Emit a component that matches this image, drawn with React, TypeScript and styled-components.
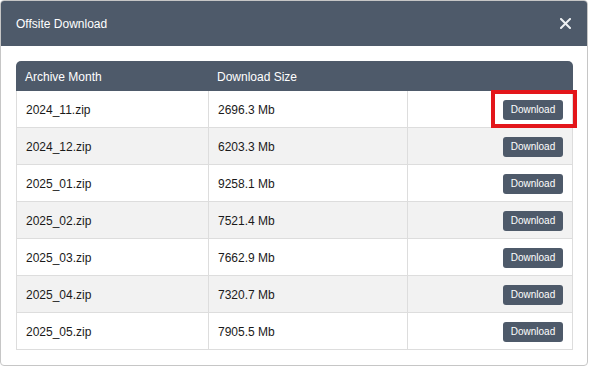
import React from 'react'
import styled, { createGlobalStyle } from 'styled-components'

const GlobalStyle = createGlobalStyle`
  html, body {
    margin: 0;
    padding: 0;
    background: #ffffff;
    font-family: "Liberation Sans", Arial, sans-serif;
  }
`

const archives = [
  { name: '2024_11.zip', size: '2696.3 Mb' },
  { name: '2024_12.zip', size: '6203.3 Mb' },
  { name: '2025_01.zip', size: '9258.1 Mb' },
  { name: '2025_02.zip', size: '7521.4 Mb' },
  { name: '2025_03.zip', size: '7662.9 Mb' },
  { name: '2025_04.zip', size: '7320.7 Mb' },
  { name: '2025_05.zip', size: '7905.5 Mb' },
]

const App: React.FC = () => {
  return (
    <>
      <GlobalStyle />
      <Dialog>
        <TitleBar>
          <Title>Offsite Download</Title>
          <CloseButton aria-label="Close">
            <svg width="11" height="11" viewBox="0 0 11 11">
              <path d="M1 1 L10 10 M10 1 L1 10" stroke="#eef0f2" strokeWidth="2" strokeLinecap="square" />
            </svg>
          </CloseButton>
        </TitleBar>
        <Body>
          <Table>
            <colgroup>
              <col style={{ width: 192 }} />
              <col style={{ width: 199 }} />
              <col />
            </colgroup>
            <thead>
              <tr>
                <HeadCell>Archive Month</HeadCell>
                <HeadCell>Download Size</HeadCell>
                <HeadCell />
              </tr>
            </thead>
            <tbody>
              {archives.map((a, i) => (
                <Row key={a.name} $alt={i % 2 === 1}>
                  <Cell>{a.name}</Cell>
                  <Cell>{a.size}</Cell>
                  <ActionCell>
                    <ButtonWrap>
                      <DownloadButton>Download</DownloadButton>
                      {i === 0 && <Highlight />}
                    </ButtonWrap>
                  </ActionCell>
                </Row>
              ))}
            </tbody>
          </Table>
        </Body>
      </Dialog>
    </>
  )
}

const Dialog = styled.div`
  box-sizing: border-box;
  width: 588px;
  height: 366px;
  border: 1px solid #c6c6c6;
  border-radius: 4px;
  background: #ffffff;
  overflow: hidden;
`

const TitleBar = styled.div`
  display: flex;
  align-items: center;
  justify-content: space-between;
  height: 45px;
  padding: 0 15px 0 15px;
  background: #4e5a6a;
  color: #ffffff;
`

const Title = styled.span`
  font-size: 12px;
`

const CloseButton = styled.span`
  display: flex;
  align-items: center;
  justify-content: center;
  width: 14px;
  height: 14px;
`

const Body = styled.div`
  padding: 15px 14px 14px 15px;
`

const Table = styled.table`
  width: 557px;
  border-collapse: separate;
  border-spacing: 0;
  table-layout: fixed;
  font-size: 12px;
  color: #1a1a1a;
`

const HeadCell = styled.th`
  height: 30px;
  padding: 1px 9px 0;
  background: #4e5a6a;
  color: #ffffff;
  font-weight: normal;
  text-align: left;
  box-sizing: border-box;
  &:first-child {
    border-top-left-radius: 5px;
  }
  &:last-child {
    border-top-right-radius: 5px;
  }
`

const Row = styled.tr<{ $alt: boolean }>`
  background: ${p => (p.$alt ? '#f2f2f2' : '#ffffff')};
`

const Cell = styled.td`
  height: 37px;
  box-sizing: border-box;
  padding: 2px 9px 0;
  border-bottom: 1px solid #dddddd;
  border-left: 1px solid #dddddd;
  &:last-child {
    border-right: 1px solid #dddddd;
  }
`

const ActionCell = styled(Cell)`
  text-align: right;
  padding: 1px 9px 0 9px;
`

const ButtonWrap = styled.span`
  position: relative;
  display: inline-block;
  vertical-align: middle;
`

const DownloadButton = styled.button`
  display: block;
  width: 60px;
  height: 20px;
  padding: 0;
  border: none;
  border-radius: 3px;
  background: #4e5a6a;
  color: #ffffff;
  font-family: "Liberation Sans", Arial, sans-serif;
  font-size: 10px;
`

const Highlight = styled.span`
  position: absolute;
  left: -12px;
  right: -14px;
  top: -10px;
  bottom: -8px;
  border: 4px solid #e3161b;
  pointer-events: none;
`

export default App
